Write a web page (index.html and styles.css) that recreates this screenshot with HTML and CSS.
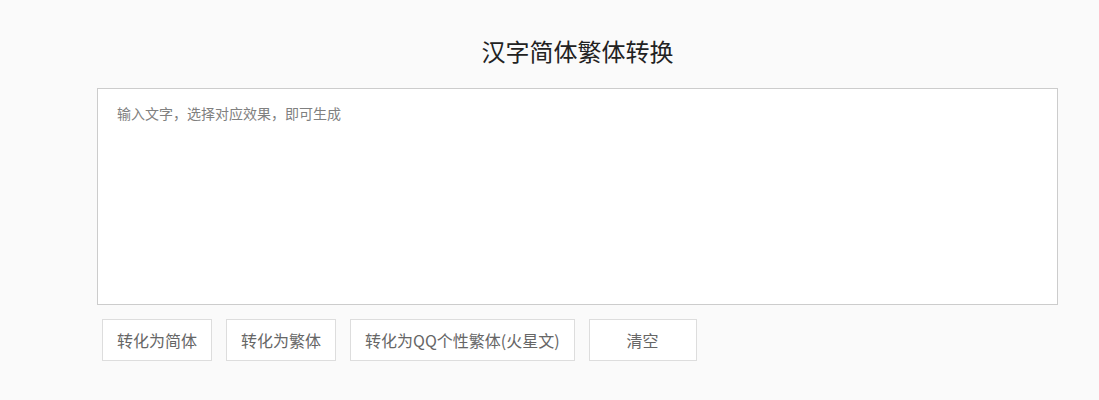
FILE: index.html
```html
<!DOCTYPE html>
<html lang="zh-CN">
<head>
    <meta charset="UTF-8">
    <meta name="viewport" content="width=device-width, initial-scale=1.0">
    <title>汉字简体繁体转换</title>
    <link rel="stylesheet" href="styles.css">
</head>
<body>
    <div class="container">
        <h1 class="title">汉字简体繁体转换</h1>

        <textarea class="text-input" id="text" placeholder="输入文字，选择对应效果，即可生成"></textarea>

        <div class="actions">
            <button class="btn">转化为简体</button>
            <button class="btn">转化为繁体</button>
            <button class="btn">转化为QQ个性繁体(火星文)</button>
            <button class="btn btn-clear">清空</button>
        </div>
    </div>
</body>
</html>
```

FILE: styles.css
```css
body {
    font-family: "Noto Sans CJK SC", "Liberation Sans", sans-serif;
    background-color: #fafafa;
    color: #333;
    margin: 0;
    padding: 0;
}

.container {
    width: 961px;
    margin-left: 97px;
}

.title {
    font-size: 24px;
    font-weight: normal;
    text-align: center;
    color: #222;
    margin: 0;
    height: 88px;
    padding-top: 34px;
    line-height: 34px;
    box-sizing: border-box;
}

.text-input {
    display: block;
    width: 100%;
    height: 217px;
    box-sizing: border-box;
    padding: 14px 19px;
    border: 1px solid #ccc;
    background-color: #fff;
    font-family: inherit;
    font-size: 14px;
    color: #333;
    resize: none;
    outline: none;
    margin: 0;
}

.text-input::placeholder {
    color: #808080;
}

.actions {
    display: flex;
    gap: 14px;
    padding-left: 5px;
    margin-top: 14px;
}

.btn {
    height: 42px;
    padding: 0 14px;
    border: 1px solid #ddd;
    background-color: #fff;
    color: #666;
    font-family: inherit;
    font-size: 16px;
    cursor: pointer;
}

.btn-clear {
    width: 108px;
}
```
